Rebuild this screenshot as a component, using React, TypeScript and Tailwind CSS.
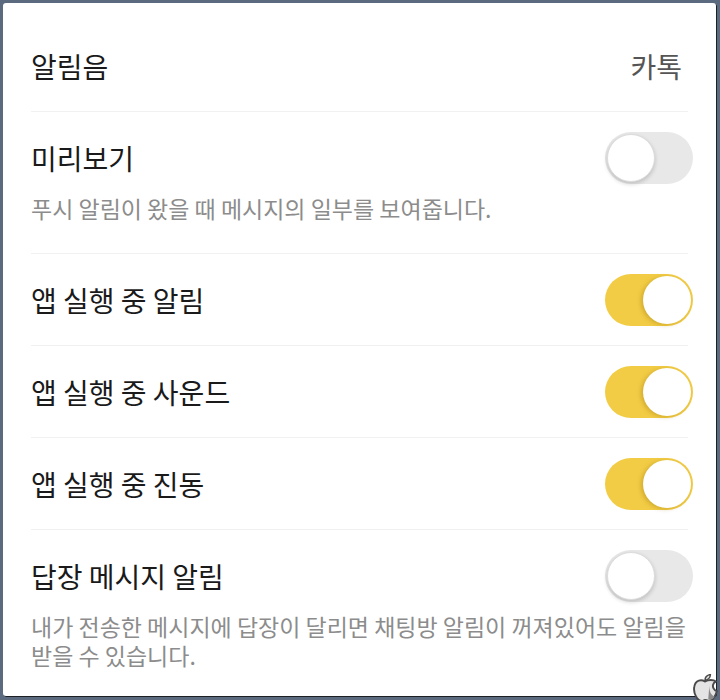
import React from "react";

const font = { fontFamily: '"Noto Sans CJK KR", "Noto Sans", sans-serif' };

function Toggle({ on }: { on: boolean }) {
  return (
    <div
      className={
        "relative shrink-0 w-[88px] h-[52px] rounded-full " +
        (on ? "bg-[#f2cc45]" : "bg-[#e8e8e8]")
      }
    >
      <div
        className={
          "absolute top-[2px] w-[48px] h-[48px] rounded-full bg-white " +
          (on
            ? "left-[38px] shadow-[-2px_1px_4px_rgba(150,110,0,0.35)]"
            : "left-[2px] border border-[#dcdcdc] shadow-[0_2px_4px_rgba(0,0,0,0.18)]")
        }
      />
    </div>
  );
}

function Divider() {
  return <div className="h-px bg-[#f1f1f1] mr-[5px]" />;
}

function SimpleRow({ title, on }: { title: string; on: boolean }) {
  return (
    <div className="flex items-center justify-between h-[91px]">
      <span className="text-[28px] text-[#1a1a1a] leading-[34px]">{title}</span>
      <Toggle on={on} />
    </div>
  );
}

function DescRow({ title, desc, on, last }: { title: string; desc: string; on: boolean; last?: boolean }) {
  return (
    <div className={"pt-[29px] " + (last ? "pb-[20px]" : "pb-[30px]")}>
      <div className="flex items-center justify-between h-[34px]">
        <span className="text-[28px] text-[#1a1a1a] leading-[34px]">{title}</span>
        <Toggle on={on} />
      </div>
      <p className="mt-[19px] text-[23px] leading-[29px] text-[#8c8c8c]">{desc}</p>
    </div>
  );
}

export default function App() {
  return (
    <div
      className="relative w-[720px] h-[700px] bg-[#5b6a7f] pt-[3px] pl-[3px] pr-[4px] pb-[4px] overflow-hidden"
      style={font}
    >
      <div className="w-[713px] h-[693px] bg-white rounded-[3px] shadow-[1px_1px_0_#1c1f24] pl-[28px] pr-[23px] pt-[18px]">
        <div className="flex items-center justify-between h-[90px]">
          <span className="text-[28px] text-[#1a1a1a] leading-[34px]">알림음</span>
          <span className="text-[28px] text-[#555555] leading-[34px] mr-[11px]">카톡</span>
        </div>
        <Divider />
        <DescRow title="미리보기" desc="푸시 알림이 왔을 때 메시지의 일부를 보여줍니다." on={false} />
        <Divider />
        <SimpleRow title="앱 실행 중 알림" on={true} />
        <Divider />
        <SimpleRow title="앱 실행 중 사운드" on={true} />
        <Divider />
        <SimpleRow title="앱 실행 중 진동" on={true} />
        <Divider />
        <DescRow
          title="답장 메시지 알림"
          desc="내가 전송한 메시지에 답장이 달리면 채팅방 알림이 꺼져있어도 알림을 받을 수 있습니다."
          on={false}
          last
        />
      </div>
      <svg
        className="absolute left-[692px] top-[674px]"
        width="26"
        height="28"
        viewBox="0 0 24 26"
      >
        <path
          d="M12 7 C9 5 3 5 2 12 C1 18 5 25 9 25 C11 25 11 24 12 24 C13 24 14 25 16 25 C19 25 22 20 23 16 C20 15 19 12 19.5 10 C20 8 21 7.5 22 7 C20 5 15 5 12 7 Z"
          fill="#e4e4e4"
          stroke="#4a4a4a"
          strokeWidth="1.8"
        />
        <path d="M12 6 C12 3 14 1 17 0.5 C17 3 15 5.5 12 6 Z" fill="#e4e4e4" stroke="#4a4a4a" strokeWidth="1.4" />
        <path d="M16 11 C16 17 18 20 21 21 C19 24 17 24.5 15 23.5 Z" fill="#8a8a8a" />
      </svg>
    </div>
  );
}
